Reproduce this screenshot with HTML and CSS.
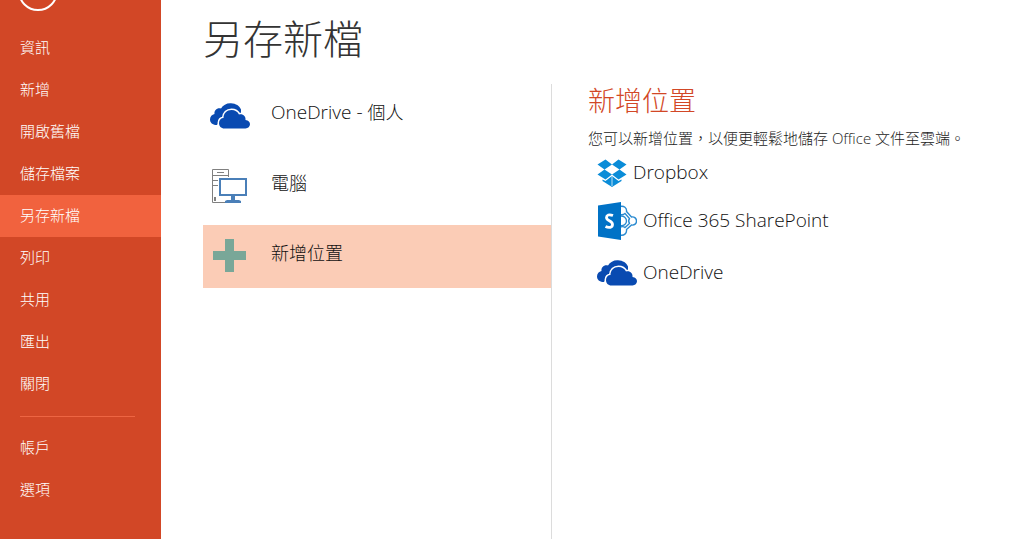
FILE: index.html
```html
<!DOCTYPE html>
<html lang="zh-Hant">
  <head>
    <meta charset="utf-8" />
    <meta name="viewport" content="width=device-width" />
    <title>另存新檔</title>
    <link rel="stylesheet" href="styles.css">
  </head>

  <body>
    <!-- cloud shape, used in both lists -->
    <svg class="symbols" aria-hidden="true">
      <symbol id="onedrive" viewBox="0 0 40 26">
        <path fill="#094ab1" d="M7 22H6.500C2.500 22 0 19.500 0 16.500 0 13.500 2 11.500 4.500 11 4 7.500 7 4.500 11 5.500 13 2 17 0 21 0.300 26 0.500 29.500 3 31 6.500V11H14z" />
        <path fill="#094ab1" stroke="#fff" stroke-width="3" paint-order="stroke" d="M14.500 25.500C11 25.500 9 23 9 20 9 17 11 15 13.500 15 13.500 10 17 7 21.500 7 25 7 27.500 8.500 29 11.500 33 10.500 36 13.500 35.500 17 38.500 17.500 40 19.200 40 21.300 40 23.500 38 25.500 35.500 25.500z" />
      </symbol>
    </svg>

    <div class="wrapper">
      <aside class="sidebar">
        <button class="back" type="button" aria-label="返回"></button>
        <nav>
          <ul class="menu">
            <li><a href="#info">資訊</a></li>
            <li><a href="#new">新增</a></li>
            <li><a href="#open">開啟舊檔</a></li>
            <li><a href="#save">儲存檔案</a></li>
            <li><a class="active" href="#saveas">另存新檔</a></li>
            <li><a href="#print">列印</a></li>
            <li><a href="#share">共用</a></li>
            <li><a href="#export">匯出</a></li>
            <li><a href="#close">關閉</a></li>
          </ul>
          <hr class="separator">
          <ul class="menu">
            <li><a href="#account">帳戶</a></li>
            <li><a href="#options">選項</a></li>
          </ul>
        </nav>
      </aside>

      <main class="page">
        <h1>另存新檔</h1>
        <div class="columns">
          <div class="places">
            <button class="place" type="button">
              <svg width="40" height="26"><use href="#onedrive" /></svg>
              <span><span class="latin">OneDrive - </span>個人</span>
            </button>
            <button class="place" type="button">
              <svg width="40" height="36" viewBox="0 0 40 36" fill="none">
                <path stroke="#808080" d="M20 34.500H2.500V1.500H18.500V9M2 7.500H18M2 12.500H8M2 17.500H8M7 4.500H14" />
                <path fill="#808080" d="M4 29h2v4H4z" />
                <path fill="#fff" stroke="#4a7fb8" stroke-width="2" d="M10 11h26v16H10z" />
                <path fill="#4a7fb8" d="M21 28h4v4h4l2 1v2H15v-2l2-1h4z" />
              </svg>
              <span>電腦</span>
            </button>
            <button class="place selected" type="button">
              <svg width="40" height="34" viewBox="0 0 40 34">
                <path fill="#79a798" d="M15 0h9v12h12v9H24v12h-9V21H3v-9h12z" />
              </svg>
              <span>新增位置</span>
            </button>
          </div>

          <section class="details">
            <h2>新增位置</h2>
            <p>您可以新增位置，以便更輕鬆地儲存 Office 文件至雲端。</p>
            <ul class="services">
              <li>
                <a href="#dropbox">
                  <svg width="30" height="28" viewBox="0 0 30 28" fill="#0a8cd8">
                    <path d="M8.500 0.500L15 5.500 7.500 10.500 0.500 5.500zM21.500 0.500L29.500 5.500 22.500 10.500 15 5.500zM0.500 15.500L7.500 10.500 15 15.500 8.500 20.500zM22.500 10.500L29.500 15.500 21.500 20.500 15 15.500z" />
                    <path d="M15 17L21.500 22 24.500 20.500V22L15 28 5.500 22V20.500L8.500 22z" />
                    <path fill="#fff" d="M15 6.500L21 10.500 15 14.500 9 10.500z" />
                    <path stroke="#b9dff5" stroke-width="1" d="M15 17V27" />
                  </svg>
                  <span>Dropbox</span>
                </a>
              </li>
              <li>
                <a href="#sharepoint">
                  <svg width="40" height="38" viewBox="0 0 40 38" fill="none">
                    <!-- connected nodes behind the tile -->
                    <g stroke="#2a8ad0" stroke-width="1.400">
                      <path d="M23 4.500C27 3.500 30 6 29.500 9.500L34.500 15C37.500 14.500 39.500 16.500 39.500 19S37.500 23.500 34.500 23L29.500 27.500C30 31.500 27 34 23 33" />
                      <path d="M23 12.500C25 13 27 12.500 28 11.500L32.500 16.500C31.500 18 31.500 20 32.500 21.500L28 25.500C27 24.500 25 24.500 23 25" />
                      <path d="M23 14C27 13.500 29.500 16 29.500 19S27 24 23 23.500" />
                    </g>
                    <path fill="#0072c6" d="M1 3.500L24 0V38L1 34.500z" />
                    <path stroke="#fff" stroke-width="2.800" d="M16 13.500C12 12 9.500 13 9.500 15.500 9.500 19 15.500 18.500 15.500 22.500 15.500 25.500 12 26.300 8.500 24.500" />
                  </svg>
                  <span>Office 365 SharePoint</span>
                </a>
              </li>
              <li class="tall">
                <a href="#onedrive-service">
                  <svg width="40" height="26"><use href="#onedrive" /></svg>
                  <span>OneDrive</span>
                </a>
              </li>
            </ul>
          </section>
        </div>
      </main>
    </div>
  </body>
</html>
```
FILE: styles.css
```css
html {
  height: 100%;
  box-sizing: border-box;
}

* {
  box-sizing: inherit;
}

body {
  height: 100%;
  margin: 0;
  background-color: #fff;
  color: #111;
  font-family: "Open Sans", "Noto Sans CJK TC", sans-serif;
  font-weight: 300;
}

h1,
h2,
p,
ul {
  margin: 0;
  padding: 0;
  font-weight: 300;
}

ul {
  list-style-type: none;
}

a {
  color: inherit;
  text-decoration: none;
}

button {
  border: 0;
  background: none;
  color: inherit;
  font: inherit;
}

svg {
  flex: none;
}

.symbols {
  position: absolute;
  width: 0;
  height: 0;
}

.wrapper {
  display: flex;
  min-height: 100%;
}

.sidebar {
  flex: none;
  width: 161px;
  overflow: hidden;
  background-color: #d24726;
  color: #fff;
}

/* scrolled half out of view */
.back {
  display: block;
  width: 40px;
  height: 40px;
  margin: -29px 0 16px 18px;
  border: 2px solid #fff;
  border-radius: 50%;
}

.menu a {
  display: block;
  padding: 0 0 2px 20px;
  font-size: 15px;
  font-weight: 300;
  line-height: 40px;
}

.menu a:hover,
.menu .active {
  background-color: #f1623e;
}

.separator {
  height: 1px;
  margin: 11px 26px 10px 20px;
  border: 0;
  background-color: #ee6542;
}

.page {
  display: flex;
  flex: 1;
  flex-direction: column;
  padding-left: 42px;
}

h1 {
  padding: 11px 0 1px;
  color: #333;
  font-size: 40px;
  line-height: 56px;
}

.columns {
  display: flex;
  flex: 1;
  margin-top: 16px;
}

.places {
  display: flex;
  flex: none;
  flex-direction: column;
  gap: 7px;
  width: 349px;
  padding-top: 1px;
  border-right: 1px solid #dcdcdc;
}

.place {
  display: flex;
  align-items: center;
  gap: 21px;
  height: 63px;
  padding: 0 7px 2px;
  font-size: 18px;
  text-align: left;
}

.place > span {
  padding-bottom: 8px;
}

.latin {
  font-size: 19px;
  white-space: pre;
}

.selected {
  background-color: #fbccb6;
}

.details {
  flex: 1;
  padding-left: 36px;
}

h2 {
  color: #d24726;
  font-size: 27px;
  line-height: 34px;
}

.details p {
  padding-top: 8px;
  color: #222;
  font-size: 15px;
  line-height: 24px;
}

.services {
  display: flex;
  flex-direction: column;
  gap: 10px;
  padding: 4px 0 0 9px;
}

.services a {
  display: flex;
  align-items: center;
  gap: 6px;
  height: 38px;
  font-size: 19px;
}

.services span {
  padding-bottom: 2px;
}

.services .tall a {
  height: 46px;
}
```
